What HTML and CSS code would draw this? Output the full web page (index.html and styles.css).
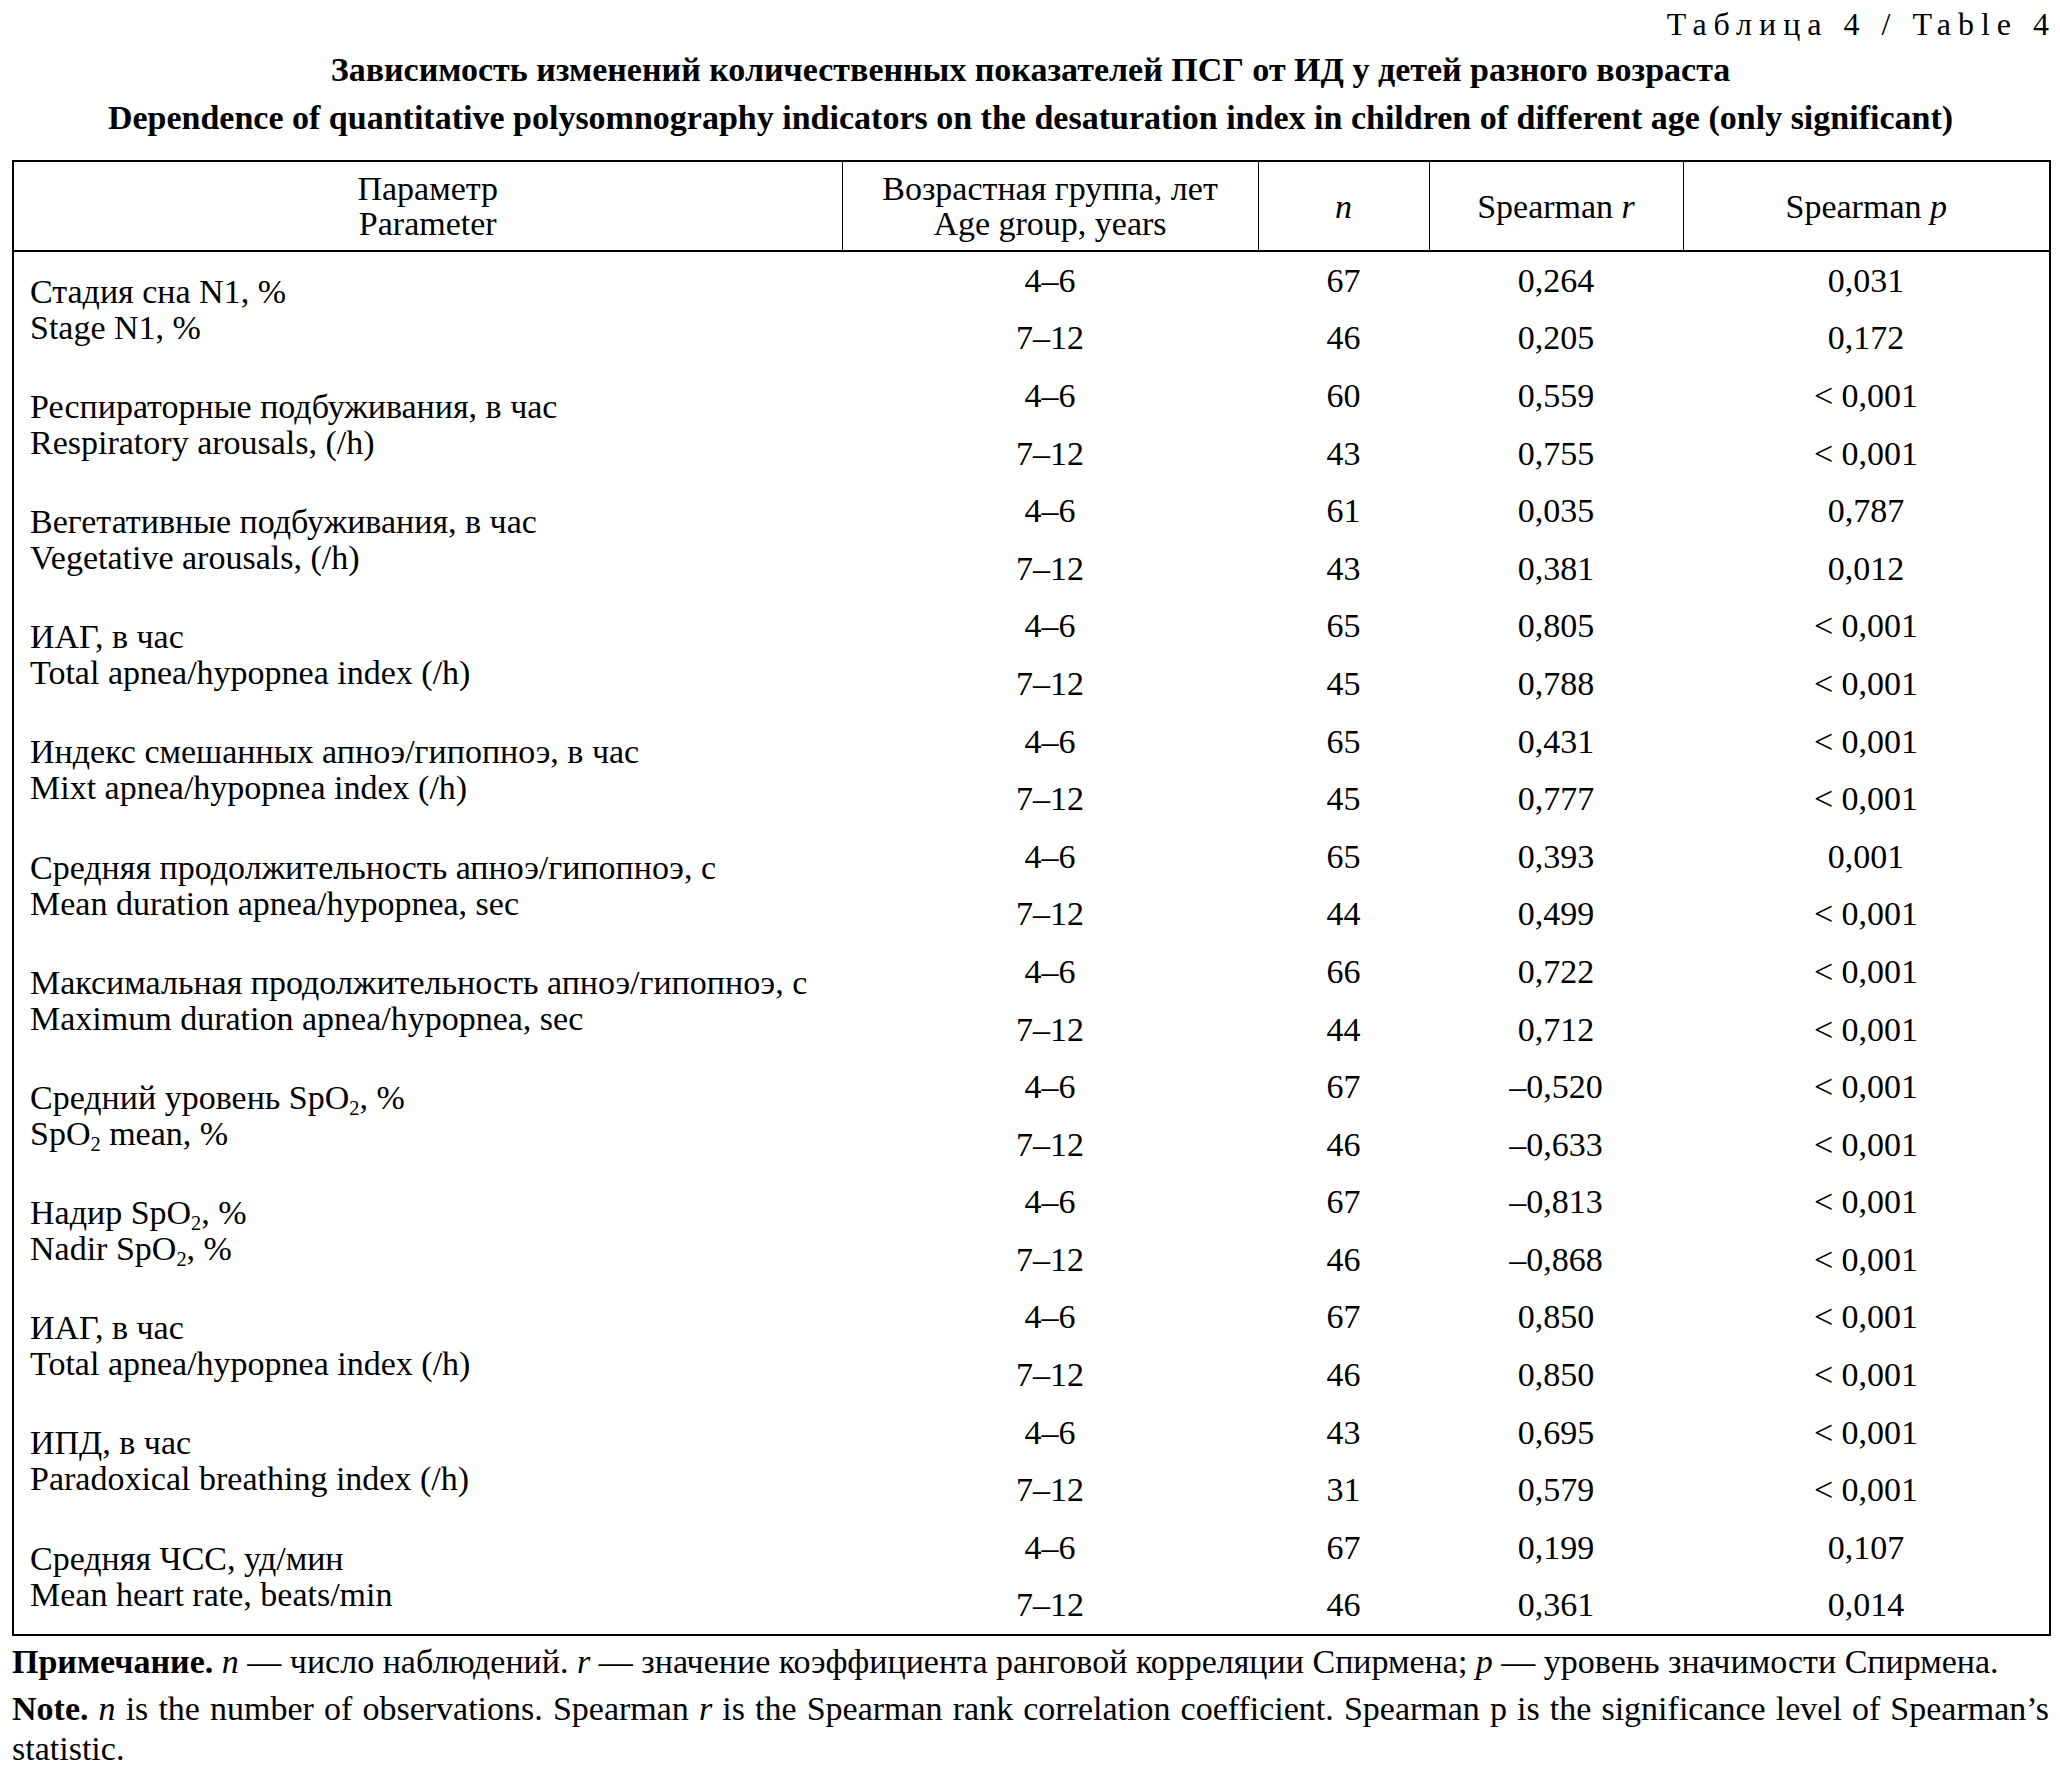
FILE: index.html
```html
<!DOCTYPE html>
<html lang="ru">
<head>
<meta charset="utf-8">
<title>Таблица 4</title>
<link rel="stylesheet" href="styles.css">
</head>
<body>
<div class="page">
  <div class="table-label"><span class="label-text">Таблица 4 / Table 4</span></div>
  <div class="title">
    <div class="title-line">Зависимость изменений количественных показателей ПСГ от ИД у детей разного возраста</div>
    <div class="title-line">Dependence of quantitative polysomnography indicators on the desaturation index in children of different age (only significant)</div>
  </div>
  <table class="data">
    <colgroup>
      <col class="c-param"><col class="c-age"><col class="c-n"><col class="c-r"><col class="c-p">
    </colgroup>
    <thead>
      <tr>
        <th>Параметр<br>Parameter</th>
        <th>Возрастная группа, лет<br>Age group, years</th>
        <th><i>n</i></th>
        <th>Spearman <i>r</i></th>
        <th>Spearman <i>p</i></th>
      </tr>
    </thead>
    <tbody>
      <tr><td class="param" rowspan="2">Стадия сна N1, %<br>Stage N1, %</td><td>4–6</td><td>67</td><td>0,264</td><td>0,031</td></tr>
      <tr><td>7–12</td><td>46</td><td>0,205</td><td>0,172</td></tr>
    </tbody>
    <tbody>
      <tr><td class="param" rowspan="2">Респираторные подбуживания, в час<br>Respiratory arousals, (/h)</td><td>4–6</td><td>60</td><td>0,559</td><td>&lt; 0,001</td></tr>
      <tr><td>7–12</td><td>43</td><td>0,755</td><td>&lt; 0,001</td></tr>
    </tbody>
    <tbody>
      <tr><td class="param" rowspan="2">Вегетативные подбуживания, в час<br>Vegetative arousals, (/h)</td><td>4–6</td><td>61</td><td>0,035</td><td>0,787</td></tr>
      <tr><td>7–12</td><td>43</td><td>0,381</td><td>0,012</td></tr>
    </tbody>
    <tbody>
      <tr><td class="param" rowspan="2">ИАГ, в час<br>Total apnea/hypopnea index (/h)</td><td>4–6</td><td>65</td><td>0,805</td><td>&lt; 0,001</td></tr>
      <tr><td>7–12</td><td>45</td><td>0,788</td><td>&lt; 0,001</td></tr>
    </tbody>
    <tbody>
      <tr><td class="param" rowspan="2">Индекс смешанных апноэ/гипопноэ, в час<br>Mixt apnea/hypopnea index (/h)</td><td>4–6</td><td>65</td><td>0,431</td><td>&lt; 0,001</td></tr>
      <tr><td>7–12</td><td>45</td><td>0,777</td><td>&lt; 0,001</td></tr>
    </tbody>
    <tbody>
      <tr><td class="param" rowspan="2">Средняя продолжительность апноэ/гипопноэ, с<br>Mean duration apnea/hypopnea, sec</td><td>4–6</td><td>65</td><td>0,393</td><td>0,001</td></tr>
      <tr><td>7–12</td><td>44</td><td>0,499</td><td>&lt; 0,001</td></tr>
    </tbody>
    <tbody>
      <tr><td class="param" rowspan="2">Максимальная продолжительность апноэ/гипопноэ, с<br>Maximum duration apnea/hypopnea, sec</td><td>4–6</td><td>66</td><td>0,722</td><td>&lt; 0,001</td></tr>
      <tr><td>7–12</td><td>44</td><td>0,712</td><td>&lt; 0,001</td></tr>
    </tbody>
    <tbody>
      <tr><td class="param" rowspan="2">Средний уровень SpO<sub>2</sub>, %<br>SpO<sub>2</sub> mean, %</td><td>4–6</td><td>67</td><td>–0,520</td><td>&lt; 0,001</td></tr>
      <tr><td>7–12</td><td>46</td><td>–0,633</td><td>&lt; 0,001</td></tr>
    </tbody>
    <tbody>
      <tr><td class="param" rowspan="2">Надир SpO<sub>2</sub>, %<br>Nadir SpO<sub>2</sub>, %</td><td>4–6</td><td>67</td><td>–0,813</td><td>&lt; 0,001</td></tr>
      <tr><td>7–12</td><td>46</td><td>–0,868</td><td>&lt; 0,001</td></tr>
    </tbody>
    <tbody>
      <tr><td class="param" rowspan="2">ИАГ, в час<br>Total apnea/hypopnea index (/h)</td><td>4–6</td><td>67</td><td>0,850</td><td>&lt; 0,001</td></tr>
      <tr><td>7–12</td><td>46</td><td>0,850</td><td>&lt; 0,001</td></tr>
    </tbody>
    <tbody>
      <tr><td class="param" rowspan="2">ИПД, в час<br>Paradoxical breathing index (/h)</td><td>4–6</td><td>43</td><td>0,695</td><td>&lt; 0,001</td></tr>
      <tr><td>7–12</td><td>31</td><td>0,579</td><td>&lt; 0,001</td></tr>
    </tbody>
    <tbody>
      <tr><td class="param" rowspan="2">Средняя ЧСС, уд/мин<br>Mean heart rate, beats/min</td><td>4–6</td><td>67</td><td>0,199</td><td>0,107</td></tr>
      <tr><td>7–12</td><td>46</td><td>0,361</td><td>0,014</td></tr>
    </tbody>
  </table>
  <p class="note"><b>Примечание.</b> <i>n</i> — число наблюдений. <i>r</i> — значение коэффициента ранговой корреляции Спирмена; <i>p</i> — уровень значимости Спирмена.</p>
  <p class="note"><b>Note.</b> <i>n</i> is the number of observations. Spearman <i>r</i> is the Spearman rank correlation coefficient. Spearman p is the significance level of Spearman’s statistic.</p>
</div>
</body>
</html>
```

FILE: styles.css
```css
html, body {
  margin: 0;
  padding: 0;
  background: #fff;
}

body {
  font-family: "Liberation Serif", "Times New Roman", serif;
  color: #000;
  font-size: 34px;
}

.page {
  padding: 0 11px 0 12px;
}

.table-label {
  text-align: right;
  font-size: 32px;
  line-height: 34px;
  padding-top: 7px;
}

.label-text {
  letter-spacing: 7px;
  margin-right: -7px;
}

.title {
  font-weight: bold;
  text-align: center;
  margin-top: 5px;
}

.title-line {
  line-height: 48px;
}

.data {
  width: 100%;
  margin-top: 18px;
  border-collapse: collapse;
  table-layout: fixed;
  border: 2px solid #000;
}

.c-param { width: 829px; }
.c-age { width: 416px; }
.c-n { width: 171px; }
.c-r { width: 254px; }
.c-p { width: 367px; }

.data th {
  font-weight: normal;
  height: 88px;
  padding: 0;
  line-height: 35px;
  border-left: 1px solid #000;
  border-right: 1px solid #000;
  border-bottom: 2px solid #000;
  vertical-align: middle;
}

.data td {
  text-align: center;
  height: 57.6px;
  padding: 0;
  line-height: 36px;
  vertical-align: middle;
}

.data td.param {
  text-align: left;
  padding-left: 16px;
}

sub {
  font-size: 0.6em;
  line-height: 0;
  vertical-align: -0.3em;
}

.note {
  margin: 0;
  line-height: 40px;
  text-align: justify;
}

.note:first-of-type {
  margin-top: 6px;
}

.note + .note {
  margin-top: 7px;
}
```
